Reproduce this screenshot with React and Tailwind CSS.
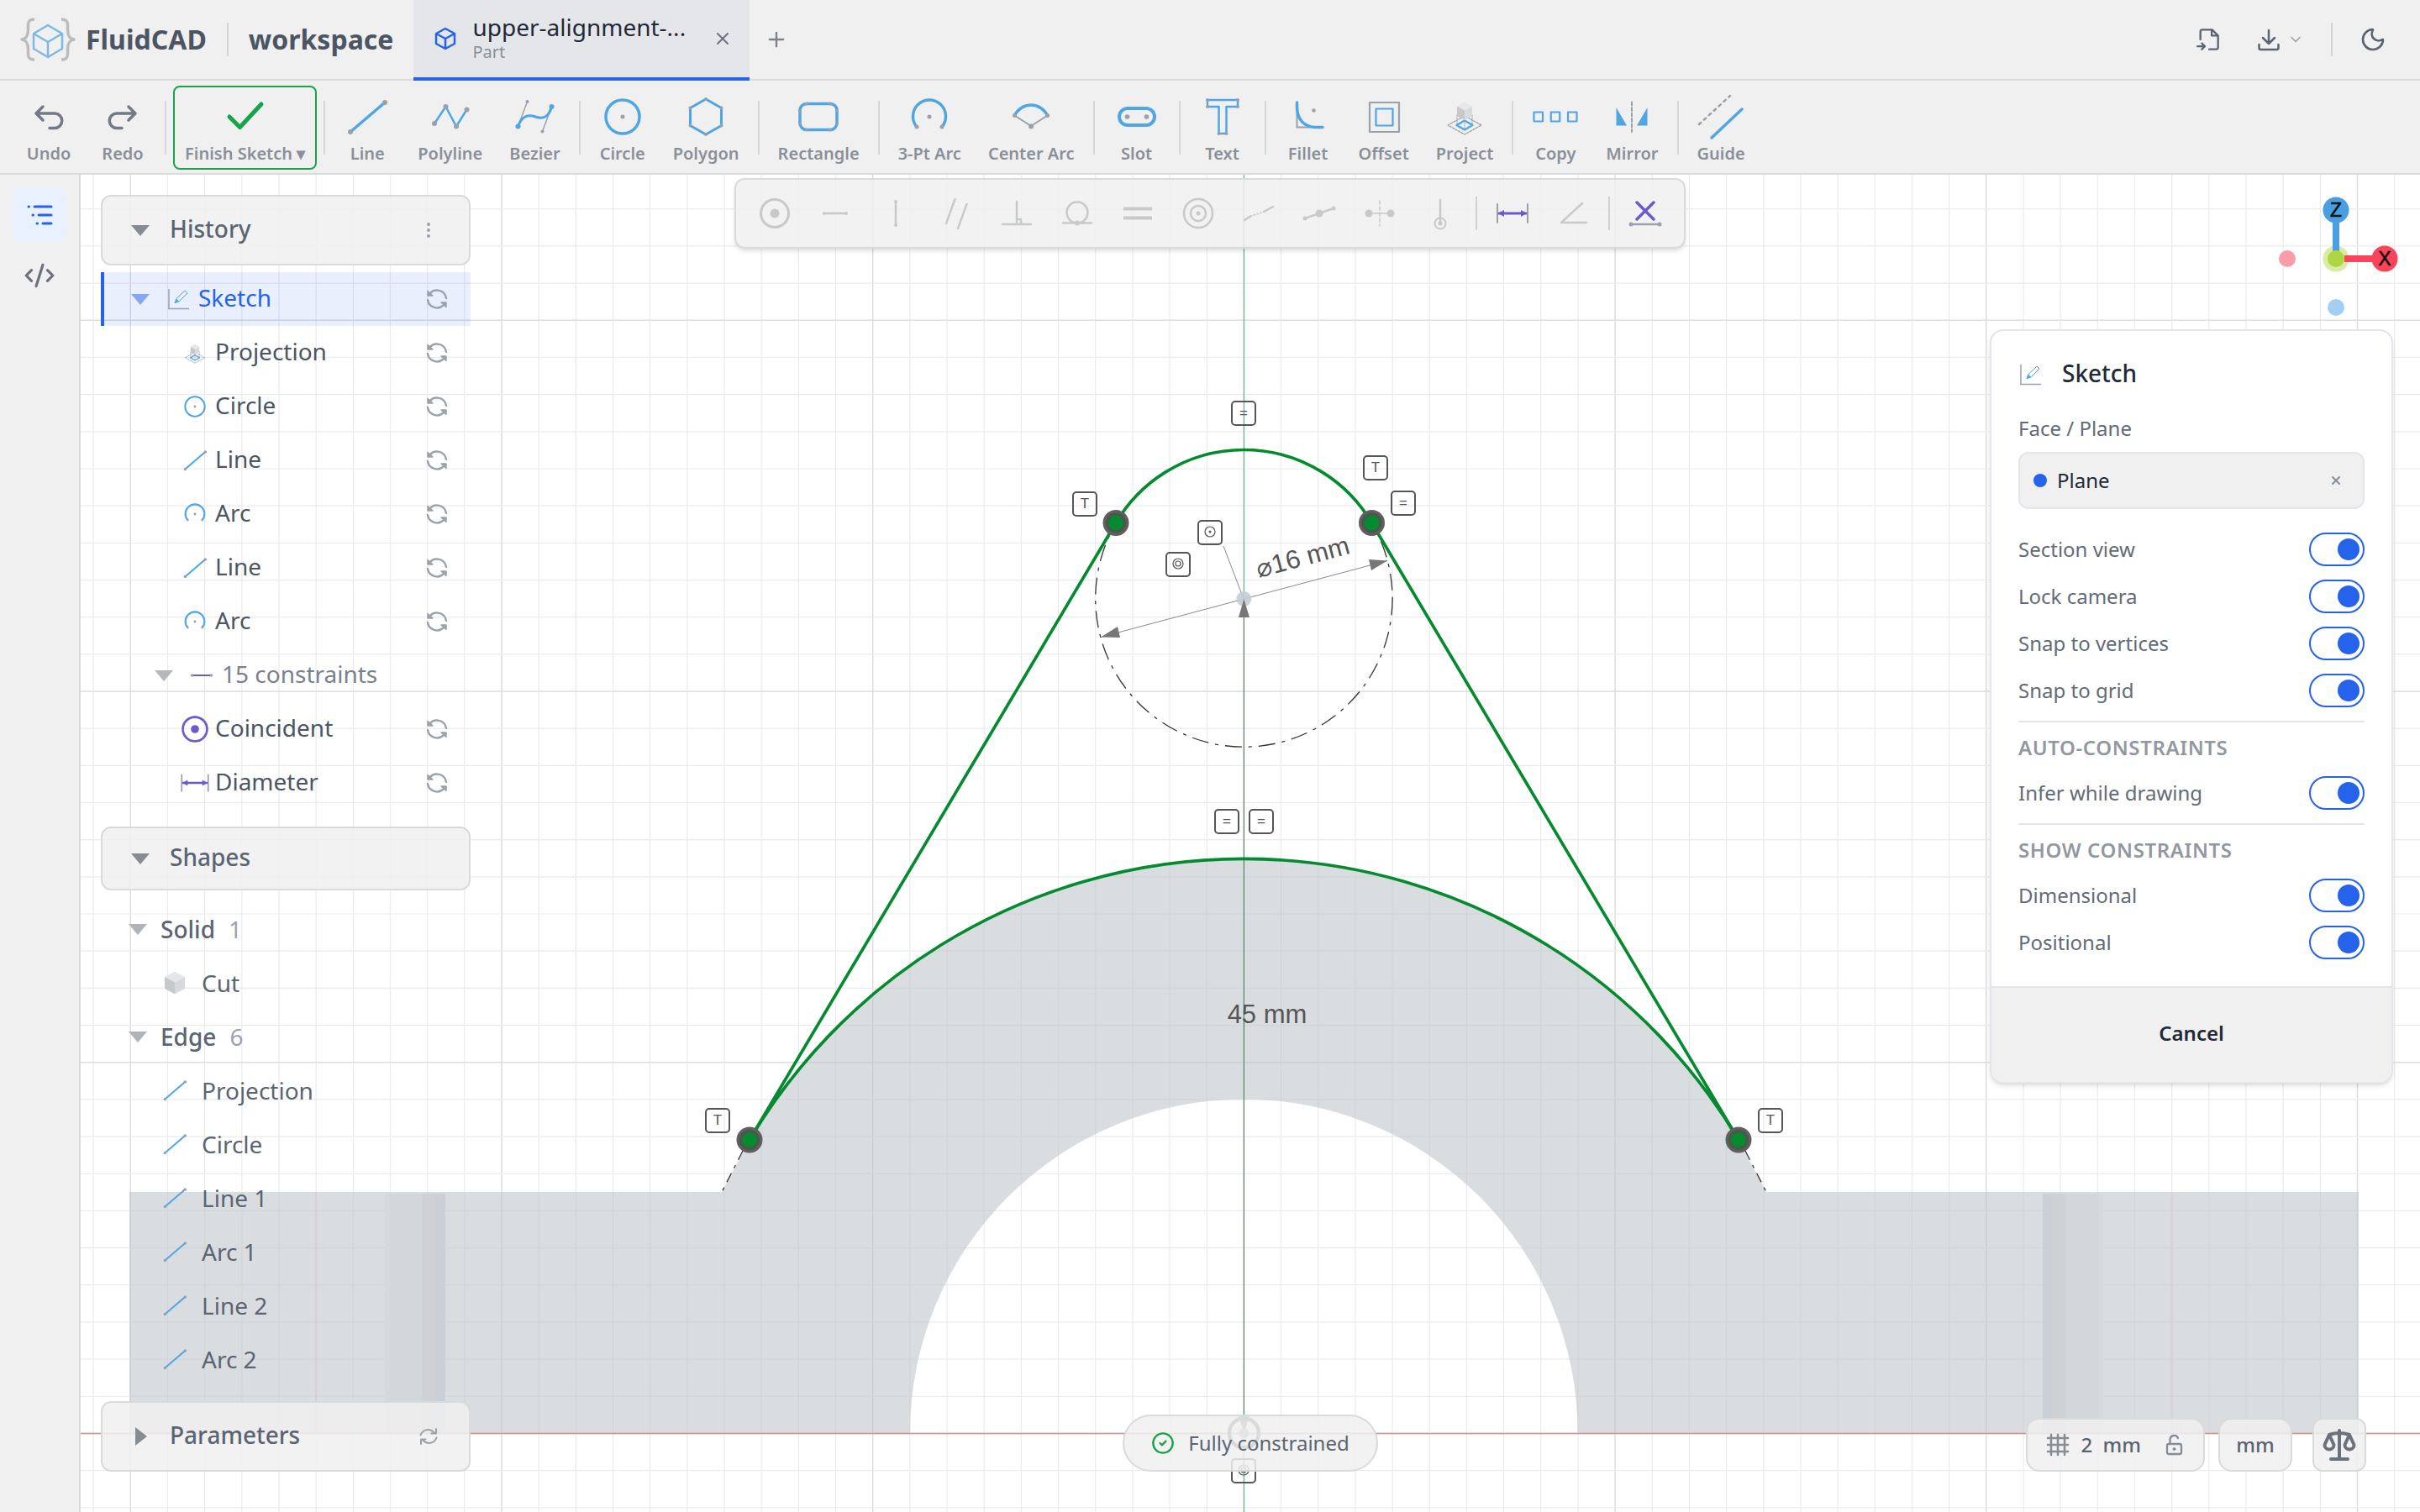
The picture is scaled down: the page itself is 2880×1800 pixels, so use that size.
import { useState } from "react";
import { X, Plus, Moon, ChevronDown, CodeXml, CircleCheck, EllipsisVertical } from "lucide-react";

const BLUE = "#4fa6e2";
const GRAY = "#9aa1ab";
const PURPLE = "#6a5acd";

const Dot = ({ x, y, r = 2, c = GRAY }) => <circle cx={x} cy={y} r={r} fill={c} stroke="none" />;

const Cube = () => (
  <g stroke="none">
    <path d="M24 4 L42 13.5 L24 23 L6 13.5 Z" fill="#e4e6e9" />
    <path d="M6 13.5 L24 23 V44 L6 34.5 Z" fill="#c6c9c9" />
    <path d="M42 13.5 L24 23 V44 L42 34.5 Z" fill="#d6dadd" />
  </g>
);

const toolIcons = {
  line: <><path d="M4 42 L45 7" stroke={BLUE} strokeWidth="3.5" /><Dot x={4} y={42} r={3} /><Dot x={45} y={7} r={3} /></>,
  polyline: <><path d="M5 32 L18.5 12 L31 35.5 L43.5 15.5" stroke={BLUE} strokeWidth="2.5" /><Dot x={5} y={32} r={3} /><Dot x={18.5} y={12} r={3} /><Dot x={31} y={35.5} r={3} /><Dot x={43.5} y={15.5} r={3} /></>,
  bezier: <><path d="M3.5 35.5 L14.5 6 M43.5 12 L32.5 41.5" stroke={GRAY} strokeWidth="1.5" /><path d="M3.5 35.5 C8 23 15 21 24 24 S40 25 43.5 12" stroke={BLUE} strokeWidth="3" /><Dot x={3.5} y={35.5} r={3} c={BLUE} /><Dot x={43.5} y={12} r={3} c={BLUE} /><Dot x={14.5} y={6} /><Dot x={32.5} y={41.5} /></>,
  circle: <><circle cx="24" cy="24" r="20" stroke={BLUE} strokeWidth="3.5" /><Dot x={24} y={24} r={2.5} /></>,
  polygon: <><path d="M24 3 L42.5 13.5 V34.5 L24 45 L5.5 34.5 V13.5 Z" stroke={BLUE} strokeWidth="3" /><Dot x={24} y={3} /><Dot x={42.5} y={13.5} /><Dot x={42.5} y={34.5} /><Dot x={24} y={45} /><Dot x={5.5} y={34.5} /><Dot x={5.5} y={13.5} /></>,
  rectangle: <><rect x="2" y="8.5" width="44" height="31" rx="8" stroke={BLUE} strokeWidth="3.5" /><Dot x={2} y={17} /><Dot x={2} y={32} /><Dot x={46} y={17} /><Dot x={46} y={32} /><Dot x={10} y={8.5} /><Dot x={38} y={8.5} /><Dot x={10} y={39.5} /><Dot x={38} y={39.5} /></>,
  arc: <><path d="M9 36 A19.5 19.5 0 1 1 39 36" stroke={BLUE} strokeWidth="3.5" /><Dot x={9} y={36} r={2.5} /><Dot x={39} y={36} r={2.5} /><Dot x={24} y={24} r={2.5} /></>,
  centerArc: <><path d="M4.5 22.5 L24 35 L43.5 22.5" stroke={GRAY} strokeWidth="2" /><path d="M4.5 22.5 A21.5 21.5 0 0 1 43.5 22.5" stroke={BLUE} strokeWidth="3.5" /><Dot x={24} y={35.5} r={3} /><Dot x={4.5} y={22.5} r={2.5} /><Dot x={43.5} y={22.5} r={2.5} /></>,
  slot: <><rect x="3" y="14" width="42" height="20" rx="10" stroke={BLUE} strokeWidth="4" /><Dot x={12.5} y={24} r={2.8} /><Dot x={35.5} y={24} r={2.8} /></>,
  text: <><path d="M6 4 H42 V12 H28.5 V44 H19.5 V12 H6 Z" stroke={BLUE} strokeWidth="2.5" /><Dot x={6} y={4} /><Dot x={42} y={4} /><Dot x={42} y={12} /><Dot x={6} y={12} /><Dot x={19.5} y={44} /><Dot x={28.5} y={44} /></>,
  fillet: <><path d="M10.5 20 V36.5 H26" stroke={GRAY} strokeWidth="2" /><path d="M10.5 7 V12 C10.5 27 19 36.5 33 36.5 H41" stroke={BLUE} strokeWidth="3.5" /><Dot x={30.5} y={16.5} r={2.3} /></>,
  offset: <><rect x="7" y="7" width="35" height="35" stroke={GRAY} strokeWidth="2.2" /><rect x="14.5" y="14.5" width="20" height="20" stroke={BLUE} strokeWidth="2.2" /></>,
  project: (
    <>
      <path d="M24 23 L44 34 L24 45 L4 34 Z" stroke={GRAY} strokeWidth="1.3" strokeDasharray="2.5 1.5" />
      <path d="M24 28.5 L33.5 34 L24 39.5 L14.5 34 Z" stroke={BLUE} strokeWidth="2.3" />
      <path d="M15 22 V34 M33 22 V34 M24 28 V39" stroke={GRAY} strokeWidth="1" strokeDasharray="1.5 1.5" />
      <path d="M24 6.5 L33 11.5 L24 16.5 L15 11.5 Z" fill="#e6e7e9" stroke="none" />
      <path d="M15 11.5 L24 16.5 V28 L15 23 Z" fill="#c6c8ca" stroke="none" />
      <path d="M33 11.5 L24 16.5 V28 L33 23 Z" fill="#d9dadb" stroke="none" />
    </>
  ),
  copy: <g stroke={BLUE} strokeWidth="2.2"><rect x="-1.5" y="18.5" width="10.5" height="11" /><rect x="18.75" y="18.5" width="10.5" height="11" /><rect x="39" y="18.5" width="10.5" height="11" /></g>,
  mirror: <><path d="M5.5 13 L18 34.5 H5.5 Z M42.5 13 L30 34.5 H42.5 Z" fill={BLUE} stroke="none" /><path d="M24 6.5 V42" stroke={GRAY} strokeWidth="2" strokeDasharray="4 2.5" /></>,
  guide: <><path d="M-2 33 L35 -1" stroke={GRAY} strokeWidth="2.5" strokeDasharray="3 5" /><path d="M13 49 L49 15" stroke={BLUE} strokeWidth="3.5" /></>,
  undo: <path d="M17 12 L9 20 L17 28 M9 20 H31 A8.5 8.5 0 0 1 31 37.5 H25" stroke="#727a84" strokeWidth="3.5" />,
  redo: <path d="M31 12 L39 20 L31 28 M39 20 H17 A8.5 8.5 0 0 0 17 37.5 H23" stroke="#727a84" strokeWidth="3.5" />,
  check: <path d="M5 24 L17.5 36.5 L43 9" stroke="#17a34a" strokeWidth="5" />,
};

const ToolIcon = ({ name, size = 48 }) => (
  <svg width={size} height={size} viewBox="0 0 48 48" fill="none" strokeLinecap="round" strokeLinejoin="round" className="overflow-visible shrink-0">
    {toolIcons[name]}
  </svg>
);

// c is the main stroke, g the helper stroke
const constraintIcons = {
  coincident: (c) => <><circle cx="24" cy="24" r="16.5" stroke={c} strokeWidth="3" /><Dot x={24} y={24} r={5.5} c={c} /></>,
  horizontal: (c, g) => <><path d="M11 24 H37" stroke={c} strokeWidth="2.5" /><Dot x={11} y={24} c={g} /><Dot x={37} y={24} c={g} /></>,
  vertical: (c, g) => <><path d="M24 10 V38" stroke={c} strokeWidth="2.5" /><Dot x={24} y={10} c={g} /><Dot x={24} y={38} c={g} /></>,
  parallel: (c) => <path d="M22.5 7 L12 36 M36.5 13 L26 42" stroke={c} strokeWidth="2.5" />,
  perpendicular: (c) => <path d="M24 10 V37 M7 37 H41 M24 31 H29 V37" stroke={c} strokeWidth="2.5" />,
  tangent: (c) => <><circle cx="24" cy="23" r="12.5" stroke={c} strokeWidth="2.5" /><path d="M7 35.5 H41" stroke={c} strokeWidth="2.5" /><Dot x={24} y={35.5} r={3} c={c} /></>,
  equal: (c) => <path d="M7 18.5 H41 M7 29.5 H41" stroke={c} strokeWidth="4" strokeLinecap="butt" />,
  concentric: (c) => <><circle cx="24" cy="24" r="17" stroke={c} strokeWidth="2.5" /><circle cx="24" cy="24" r="9" stroke={c} strokeWidth="2.5" /><Dot x={24} y={24} r={2.5} c={c} /></>,
  collinear: (c) => <><path d="M7 32 L15 27 M30 22 L41 16" stroke={c} strokeWidth="2.5" /><path d="M18 26 L28 23" stroke={c} strokeWidth="1.5" strokeDasharray="1.5 2.5" /></>,
  midpoint: (c) => <><path d="M7 30 L41 18" stroke={c} strokeWidth="2.5" /><Dot x={24} y={24} r={4.5} c={c} /><Dot x={7} y={30} r={2.5} c={c} /><Dot x={41} y={18} r={2.5} c={c} /></>,
  symmetric: (c) => <><path d="M24 9 V39" stroke={c} strokeWidth="1.5" strokeDasharray="4 3" /><path d="M11 24 H37" stroke={c} strokeWidth="1.5" /><Dot x={11} y={24} r={4.5} c={c} /><Dot x={37} y={24} r={4.5} c={c} /></>,
  fix: (c) => <><path d="M24 8 V35" stroke={c} strokeWidth="2.5" /><circle cx="24" cy="36" r="6.5" stroke={c} strokeWidth="2" /><Dot x={24} y={36} r={2.5} c={c} /></>,
  dimension: (c, g) => <><path d="M6 13 V35 M42 13 V35" stroke={g} strokeWidth="2" /><path d="M8 24 H40" stroke={c} strokeWidth="3" /><path d="M7 24 L14 20 V28 Z M41 24 L34 20 V28 Z" fill={c} stroke="none" /></>,
  angle: (c) => <path d="M35 12 L10 35 H40" stroke={c} strokeWidth="2.5" />,
  remove: (c, g) => <><path d="M14 11 L34 31 M34 11 L14 31" stroke={c} strokeWidth="3.5" /><path d="M7 37 H41" stroke={g} strokeWidth="2.5" /><Dot x={7} y={37} c={g} r={2.5} /><Dot x={41} y={37} c={g} r={2.5} /></>,
};

const ConstraintIcon = ({ name, size = 32, disabled }) => (
  <svg width={size} height={size} viewBox="8 8 32 32" fill="none" strokeLinecap="round" strokeLinejoin="round" className="overflow-visible shrink-0">
    {constraintIcons[name](disabled ? "#c8c9ca" : PURPLE, disabled ? "#c8c9ca" : GRAY)}
  </svg>
);

const SketchIcon = ({ size = 28 }) => (
  <svg width={size} height={size} viewBox="0 0 28 28" fill="none" className="shrink-0">
    <path d="M3 2 V26 M2 25.5 H27" stroke="#9aa1ab" strokeWidth="1.5" />
    <path d="M12 13.5 L22 4 L25 7 L15 17 L10 18.5 Z" stroke={BLUE} strokeWidth="1" />
    <path d="M9.5 19 L12 13.5 L15 17 Z" fill={BLUE} />
  </svg>
);

const ShapeIcon = ({ name }) => {
  if (name === "cube") return <svg width="32" height="32" viewBox="2 0 44 48" className="shrink-0"><Cube /></svg>;
  if (constraintIcons[name]) return <ConstraintIcon name={name} size={28} />;
  return <ToolIcon name={name} size={28} />;
};

const Sync = () => (
  <svg width="24" height="24" viewBox="0 0 24 24" fill="none" stroke="currentColor" strokeWidth="2.4" strokeLinecap="round" strokeLinejoin="round" className="overflow-visible">
    <path d="M23 11 A11 11 0 0 0 3 6.5 M1 13 A11 11 0 0 0 21 17.5" />
    <path d="M1 2.5 V8 H7 Z M23 21.5 V16 H17 Z" fill="currentColor" strokeWidth="1.5" />
  </svg>
);

const SyncThin = () => (
  <svg width="24" height="24" viewBox="0 0 24 24" fill="none" stroke="currentColor" strokeWidth="2" strokeLinecap="round" strokeLinejoin="round">
    <path d="M2.5 10.5 C4.5 4.5 11 2.5 16.5 5.5 L20 8.5 M21 3 V8.5 H15.5 M21.5 13.5 C19.5 19.5 13 21.5 7.5 18.5 L4 15.5 M3 21 V15.5 H8.5" />
  </svg>
);

const Triangle = ({ open = true, className }) => (
  <svg width="22" height="22" viewBox="0 0 22 22" fill="currentColor" className={className}>
    {open ? <path d="M0 5 H22 L11 18 Z" /> : <path d="M5 0 V22 L19 11 Z" />}
  </svg>
);

const tools = [
  ["Undo", "undo"], ["Redo", "redo"], null,
  ["Finish Sketch ▾", "check"], null,
  ["Line", "line"], ["Polyline", "polyline"], ["Bezier", "bezier"], null,
  ["Circle", "circle"], ["Polygon", "polygon"], null,
  ["Rectangle", "rectangle"], null,
  ["3-Pt Arc", "arc"], ["Center Arc", "centerArc"], null,
  ["Slot", "slot"], null,
  ["Text", "text"], null,
  ["Fillet", "fillet"], ["Offset", "offset"], ["Project", "project"], null,
  ["Copy", "copy"], ["Mirror", "mirror"], null,
  ["Guide", "guide"],
];

const constraints = ["coincident", "horizontal", "vertical", "parallel", "perpendicular", "tangent", "equal", "concentric", "collinear", "midpoint", "symmetric", "fix", null, "dimension", "angle", null, "remove"];

const history = [
  { label: "Projection", icon: "project" },
  { label: "Circle", icon: "circle" },
  { label: "Line", icon: "line" },
  { label: "Arc", icon: "arc" },
  { label: "Line", icon: "line" },
  { label: "Arc", icon: "arc" },
  { label: "15 constraints", icon: "horizontal", group: true },
  { label: "Coincident", icon: "coincident" },
  { label: "Diameter", icon: "dimension" },
];

const edges = ["Projection", "Circle", "Line 1", "Arc 1", "Line 2", "Arc 2"];

const Header = () => (
  <header className="h-24 shrink-0 flex items-stretch bg-[#f0f0f0] border-b-2 border-[#d9dadc]">
    <div className="flex items-center pl-6">
      <svg width="66" height="52" viewBox="0 0 66 52" fill="none" strokeLinejoin="round" className="shrink-0">
        <path d="M17 2 C8 2 9.5 8 9.5 14 C9.5 21 8 25 2 26 C8 27 9.5 31 9.5 38 C9.5 44 8 50 17 50 M49 2 C58 2 56.5 8 56.5 14 C56.5 21 58 25 64 26 C58 27 56.5 31 56.5 38 C56.5 44 58 50 49 50" stroke="#bcbcbc" strokeWidth="3.5" />
        <path d="M33 9 L50 19 V37 L33 47 L16 37 V19 Z M16 19 L33 29 L50 19 M33 29 V47" stroke="#7db9e3" strokeWidth="2.5" />
      </svg>
      <h1 className="ml-3 text-[32px] font-bold text-[#4b5563]">FluidCAD</h1>
      <div className="w-[2px] h-10 bg-[#d2d4d6] ml-6" />
      <span className="ml-6 text-[32px] font-bold text-[#4b5563]">workspace</span>
    </div>
    <div className="ml-6 w-[400px] -mb-[2px] flex items-center pl-6 pr-5 bg-[#e5e6ea] border-b-4 border-[#2563eb]">
      <svg width="28" height="28" viewBox="0 0 28 28" fill="none" stroke="#2563eb" strokeWidth="2.5" strokeLinejoin="round">
        <path d="M14 2 L25 8 V20 L14 26 L3 20 V8 Z M3 8 L14 14 L25 8 M14 14 V26" />
      </svg>
      <div className="ml-[18px] flex-1 flex flex-col">
        <span className="text-[28px] leading-8 text-[#1f2937] whitespace-nowrap">upper-alignment-...</span>
        <span className="text-[20px] leading-7 text-[#8a9099]">Part</span>
      </div>
      <button aria-label="Close tab" className="text-[#6b7280]"><X size={24} /></button>
    </div>
    <button aria-label="New tab" className="ml-4 w-8 flex items-center justify-center text-[#7b828c]"><Plus size={28} /></button>
    <div className="ml-auto pr-10 flex items-center text-[#5b6472]">
      <button aria-label="Import">
        <svg width="28" height="28" viewBox="0 0 24 24" fill="none" stroke="currentColor" strokeWidth="2" strokeLinecap="round" strokeLinejoin="round">
          <path d="M4 12 V4 A2 2 0 0 1 6 2 H16 L22 8 V20 A2 2 0 0 1 20 22 H13 M15.5 2 V8 H22 M1 19 H8 M5.5 16 L8.5 19 L5.5 22" />
        </svg>
      </button>
      <button aria-label="Export" className="ml-11 flex items-center gap-2">
        <svg width="28" height="28" viewBox="0 0 28 28" fill="none" stroke="currentColor" strokeWidth="2.5" strokeLinecap="round" strokeLinejoin="round">
          <path d="M14 3 V19 M7 12 L14 19 L21 12 M2.5 20 V24 A2 2 0 0 0 4.5 26 H23.5 A2 2 0 0 0 25.5 24 V20" />
        </svg>
        <ChevronDown size={20} className="text-[#9aa1ab]" />
      </button>
      <div className="w-[2px] h-10 bg-[#d2d4d6] ml-8 mr-8" />
      <button aria-label="Dark mode"><Moon size={32} strokeWidth={2} /></button>
    </div>
  </header>
);

const Toolbar = () => (
  <nav className="h-28 shrink-0 flex items-center gap-1 pl-4 pt-[2px] bg-[#f0f0f0] border-b-2 border-[#d9dadc]">
    {tools.map((tool, i) =>
      tool ? (
        <button
          key={i}
          className={`h-[100px] min-w-[84px] pt-[8px] flex flex-col items-center justify-center gap-[6px] rounded-lg text-[20px] leading-7 font-semibold text-[#8a9099] whitespace-nowrap ${tool[1] === "check" ? "px-3 border-2 border-[#17a34a]" : "px-[14px]"}`}
        >
          <ToolIcon name={tool[1]} />
          {tool[0]}
        </button>
      ) : (
        <div key={i} className="w-[2px] h-16 mx-1 bg-[#d5d7da]" />
      )
    )}
  </nav>
);

const Rail = () => (
  <nav className="w-24 shrink-0 bg-[#f0f0f0] border-r-2 border-[#d9dadc] flex flex-col items-center gap-2 pt-4">
    <button aria-label="Feature tree" className="size-16 rounded-lg bg-[#eaf1fe] flex items-center justify-center text-[#2563eb]">
      <svg width="32" height="32" viewBox="0 0 32 32" fill="none" stroke="currentColor" strokeWidth="3" strokeLinecap="round">
        <path d="M3 6 H3.5 M10 6 H30 M8 16 H8.5 M15 16 H30 M13 26 H13.5 M20 26 H30" />
      </svg>
    </button>
    <button aria-label="Code" className="size-16 flex items-center justify-center text-[#6b727c]"><CodeXml size={38} /></button>
  </nav>
);

const SectionHead = ({ title, open = true, className, children }) => (
  <div className={`flex items-center justify-between pl-[34px] pr-9 border-2 border-[#d9dadc] rounded-xl bg-[#f0f0f0]/85 ${className}`}>
    <button className="flex items-center gap-6 text-[28px] leading-10 font-medium text-[#5b6472]">
      <Triangle open={open} className="text-[#868c94]" />
      <span className="pb-1">{title}</span>
    </button>
    {children}
  </div>
);

const TreeRow = ({ label, icon, group }) => (
  <li className={`h-16 flex items-center pr-7 text-[28px] leading-10 ${group ? "pl-16 text-[#7a818b]" : "pl-[98px] text-[#4b5563]"}`}>
    {group && <Triangle className="text-[#b4b8bc] mr-5" />}
    <ShapeIcon name={icon} />
    <span className="flex-1 ml-[10px] pb-1">{label}</span>
    {!group && <button aria-label={`Rebuild ${label}`} className="text-[#9ca3a9]"><Sync /></button>}
  </li>
);

const GroupRow = ({ label, count }) => (
  <li className="h-16 flex items-center pl-[33px] text-[28px] leading-10 font-medium text-[#5b6472]">
    <Triangle className="text-[#b0b4b8]" />
    <span className="ml-4">{label}</span>
    <span className="ml-4 font-normal text-[#9ca3af]">{count}</span>
  </li>
);

const ShapeRow = ({ label, icon = "line" }) => (
  <li className="h-16 flex items-center pl-[72px] gap-4 text-[28px] leading-10 text-[#5b6472]">
    <span className="w-8 flex justify-center"><ShapeIcon name={icon} /></span>
    {label}
  </li>
);

const TreePanel = () => (
  <aside className="w-[440px] flex flex-col">
    <SectionHead title="History" className="h-[84px]">
      <button aria-label="History menu" className="text-[#9aa1a8]"><EllipsisVertical size={24} /></button>
    </SectionHead>
    <ul className="mt-2">
      <li className="h-16 flex items-center pl-8 pr-7 border-l-4 border-[#2563eb] bg-[#2563eb]/10 text-[28px] leading-10 text-[#2563eb]">
        <Triangle className="text-[#86a6f2] mr-5" />
        <SketchIcon />
        <span className="flex-1 ml-[10px] pb-1">Sketch</span>
        <button aria-label="Rebuild Sketch" className="text-[#97a2b2]"><Sync /></button>
      </li>
      {history.map((item, i) => <TreeRow key={i} {...item} />)}
    </ul>
    <SectionHead title="Shapes" className="h-[76px] mt-5" />
    <ul className="mt-[14px]">
      <GroupRow label="Solid" count={1} />
      <ShapeRow label="Cut" icon="cube" />
      <GroupRow label="Edge" count={6} />
      {edges.map((label) => <ShapeRow key={label} label={label} />)}
    </ul>
    <SectionHead title="Parameters" open={false} className="h-[84px] mt-auto">
      <button aria-label="Reset parameters" className="text-[#9aa1a8]"><SyncThin /></button>
    </SectionHead>
  </aside>
);

const Gizmo = () => (
  <svg width="160" height="160" viewBox="0 0 160 160" className="mr-5 font-['Liberation_Sans',sans-serif]">
    <circle cx="22" cy="80" r="10" fill="#fb9ca9" />
    <circle cx="80" cy="138" r="10" fill="#a3cff2" />
    <circle cx="80" cy="80" r="15.5" fill="#d8eca3" />
    <path d="M80 22 V72" stroke="#4a9fe3" strokeWidth="8" />
    <path d="M90 80 H138" stroke="#fb4459" strokeWidth="8" />
    <circle cx="80" cy="80" r="10" fill="#acd742" />
    <circle cx="80" cy="22" r="15.5" fill="#4a9fe3" />
    <circle cx="138" cy="80" r="15.5" fill="#fb4459" />
    <text x="80" y="30" textAnchor="middle" fontSize="23" fill="#111" stroke="#111" strokeWidth="0.6">Z</text>
    <text x="138" y="88" textAnchor="middle" fontSize="23" fill="#111" stroke="#111" strokeWidth="0.6">X</text>
  </svg>
);

const Toggle = ({ label }) => {
  const [on, setOn] = useState(true);
  return (
    <label className="h-10 flex items-center justify-between text-[24px] leading-8 text-[#636b76]">
      {label}
      <input
        type="checkbox"
        checked={on}
        onChange={(e) => setOn(e.target.checked)}
        className="appearance-none w-[66px] h-10 px-1 flex items-center rounded-full border-2 border-gray-400 bg-white checked:border-[#2563eb] before:block before:size-[26px] before:rounded-full before:bg-gray-400 checked:before:bg-[#2563eb] checked:before:ml-auto"
      />
    </label>
  );
};

const GroupTitle = ({ children }) => (
  <h3 className="h-8 pb-1 flex items-center text-[24px] leading-8 font-semibold tracking-wide text-[#9298a0]">{children}</h3>
);

const SketchPanel = () => (
  <section className="mt-1 mr-8 w-[480px] rounded-2xl border-2 border-[#e4e5ea] bg-white shadow-md overflow-hidden">
    <div className="p-8">
      <div className="h-10 flex items-center gap-6">
        <SketchIcon />
        <h2 className="pb-1 text-[28px] leading-10 font-medium text-[#1f2937]">Sketch</h2>
      </div>
      <p className="mt-7 text-[24px] leading-8 text-[#636b76]">Face / Plane</p>
      <div className="mt-3 h-[68px] flex items-center rounded-xl border-2 border-[#e4e5ea] bg-[#f0f0f0] px-4">
        <span className="size-4 rounded-full bg-[#2563eb]" />
        <span className="ml-3 flex-1 text-[24px] leading-8 text-[#1f2937]">Plane</span>
        <button aria-label="Clear plane" className="w-8 flex justify-center text-[#868d96]"><X size={16} strokeWidth={3} /></button>
      </div>
      <div className="mt-7 flex flex-col gap-4">
        <Toggle label="Section view" />
        <Toggle label="Lock camera" />
        <Toggle label="Snap to vertices" />
        <Toggle label="Snap to grid" />
        <div className="h-[2px] bg-[#e4e5ea]" />
        <GroupTitle>AUTO-CONSTRAINTS</GroupTitle>
        <Toggle label="Infer while drawing" />
        <div className="h-[2px] bg-[#e4e5ea]" />
        <GroupTitle>SHOW CONSTRAINTS</GroupTitle>
        <Toggle label="Dimensional" />
        <Toggle label="Positional" />
      </div>
    </div>
    <button className="w-full h-[114px] pb-1 border-t-2 border-[#e4e5ea] bg-[#f0f0f0] text-[24px] leading-8 font-semibold text-[#1f2937]">Cancel</button>
  </section>
);

const ConstraintBar = () => (
  <div className="absolute top-[212px] inset-x-0 flex justify-center pointer-events-none">
    <div className="pointer-events-auto flex items-center gap-2 py-2 px-[14px] rounded-xl border-2 border-[#d9dadc] bg-[#f0f0f0]/85 shadow-md">
      {constraints.map((name, i) =>
        name ? (
          <button key={i} aria-label={name} className="size-16 flex items-center justify-center">
            <ConstraintIcon name={name} disabled={i < 13 || name === "angle"} />
          </button>
        ) : (
          <div key={i} className="w-[2px] h-10 mx-[2px] bg-[#cfd1d4]" />
        )
      )}
    </div>
  </div>
);

// sketch space: origin at the axes crossing, one grid step is 2 mm
const OX = 1480.4;
const OY = 1706.4;
const STEP = 44.17;

const badges = [
  [1480, 492, "="], [1291, 600, "T"], [1637, 557, "T"], [1670, 599, "="],
  [1440, 634, "⊙"], [1402, 672, "◎"], [1460, 978, "="], [1501, 978, "="],
  [854, 1334, "T"], [2107, 1334, "T"], [1480, 1751, "◎"],
];

const Badge = ({ x, y, glyph }) => (
  <g stroke="#555" fill="none">
    <rect x={x - 14} y={y - 14} width="28" height="28" rx="4" strokeWidth="2" />
    {glyph === "⊙" || glyph === "◎" ? (
      <>
        <circle cx={x} cy={y - 1} r="6" strokeWidth="1.2" />
        {glyph === "◎" ? <circle cx={x} cy={y - 1} r="3" strokeWidth="1.2" /> : <circle cx={x} cy={y - 1} r="1.5" fill="#555" stroke="none" />}
      </>
    ) : (
      <text x={x} y={y + 5} textAnchor="middle" fontSize="17" fill="#555" stroke="none">{glyph}</text>
    )}
  </g>
);

const Node = ({ x, y }) => (
  <g>
    <circle cx={x} cy={y} r="15.5" fill="#5f5f5f" />
    <circle cx={x} cy={y} r="12" fill="#4a574b" />
    <circle cx={x} cy={y} r="9" fill="#058a30" />
  </g>
);

const SolidBand = ({ flip }) => (
  <g transform={flip ? `translate(${OX * 2} 0) scale(-1 1)` : undefined}>
    <rect x="375" y="1419" width="2" height="287" fill="#d8d0d0" />
    <rect x="458" y="1421" width="6" height="285" fill="#d7d8da" />
    <rect x="464" y="1421" width="38" height="285" fill="#d3d6d8" />
    <rect x="502" y="1421" width="17" height="285" fill="#cfd1d4" />
    <rect x="519" y="1421" width="11" height="285" fill="#cbcfd8" />
  </g>
);

const Canvas = () => {
  const cols = [];
  for (let n = -32; n <= 32; n++) cols.push(n);
  const rows = [];
  for (let n = -3; n <= 34; n++) rows.push(n);
  return (
    <svg viewBox="96 208 2784 1592" preserveAspectRatio="xMidYMid slice" className="absolute inset-0 w-full h-full font-['Liberation_Sans',sans-serif]">
      {cols.map((n) => <path key={n} d={`M${OX + n * STEP} 208 V1800`} stroke={n % 10 === 0 ? "#dcdde0" : "#ebebef"} strokeWidth={n % 10 === 0 ? 1.5 : 1.2} />)}
      {rows.map((n) => <path key={n} d={`M96 ${OY - n * STEP} H2880`} stroke={n % 10 === 0 ? "#dcdde0" : "#ebebef"} strokeWidth={n % 10 === 0 ? 1.5 : 1.2} />)}

      <path
        d="M154 1706 V1419 H859 L892 1357 A684.8 684.8 0 0 1 2069 1357 L2102 1419 H2807 V1706 H1877.6 A397.3 397.3 0 0 0 1083 1706 Z"
        fill="#c0c6cb"
        fillOpacity="0.6"
      />
      <SolidBand />
      <SolidBand flip />
      <path d="M96 1706.5 H2880" stroke="#d98c8c" strokeWidth="1.5" />
      <path d={`M${OX} 208 V1800`} stroke="#52ad78" strokeWidth="1" />
      <path d={`M${OX} 713 V1706`} stroke="#4d8663" strokeWidth="1" />

      <circle cx={OX} cy="712.5" r="176.7" stroke="#333" strokeWidth="1.3" fill="none" strokeDasharray="20 8 4 8" />
      <path d="M884 1370 L859 1419 M2077 1370 L2102 1419" stroke="#333" strokeWidth="1.3" strokeDasharray="12 7 4 7" />
      <path d="M1456 650 L1480 713 M1310 758.5 L1651 667.5" stroke="#8a8a8a" strokeWidth="1" />
      <path d="M1310 758.5 L1330 746 L1333 759 Z M1651 667.5 L1629 666 L1632 679 Z" fill="#777" />
      <circle cx={OX} cy="713" r="9" fill="#c5ccd5" fillOpacity="0.9" />
      <path d="M1480.4 713 L1487 735 H1474 Z M1480.4 1706 L1487 1685 H1474 Z" fill="#777" />

      <g fill="none" stroke="#058a30" strokeWidth="3.7">
        <path d="M892 1357 L1328 622.5 A176.7 176.7 0 0 1 1632.5 622.5 L2069 1357" />
        <path d="M892 1357 A684.8 684.8 0 0 1 2069 1357" />
      </g>
      <Node x={1328} y={622.5} />
      <Node x={1632.5} y={622.5} />
      <Node x={892} y={1357} />
      <Node x={2069} y={1357} />

      <circle cx={OX} cy="1706" r="17.5" fill="none" stroke="#5f5f5f" strokeWidth="4.5" />
      <circle cx={OX} cy="1706" r="6" fill="#9aa5b3" />
      {badges.map(([x, y, glyph], i) => <Badge key={i} x={x} y={y} glyph={glyph} />)}
      <text x="1508" y="1218" textAnchor="middle" fontSize="31" fill="#555">45 mm</text>
      <text x="1498" y="688" fontSize="31" fill="#555" transform="rotate(-15 1498 688)">⌀16 mm</text>
    </svg>
  );
};

const BottomBar = () => (
  <div className="mt-auto mb-12 mr-16 flex items-center text-[24px] leading-8 font-medium text-[#5b6472]">
    <div className="h-16 flex items-center px-[22px] rounded-2xl border-2 border-[#d9dadc] bg-[#f0f0f0]/85">
      <svg width="28" height="28" viewBox="0 0 28 28" stroke="#868d96" strokeWidth="2.5" strokeLinecap="round">
        <path d="M6 2 V26 M14 2 V26 M22 2 V26 M2 6 H26 M2 14 H26 M2 22 H26" />
      </svg>
      <input aria-label="Grid spacing" defaultValue="2" className="ml-[14px] w-[14px] bg-transparent outline-none" />
      <span className="ml-3">mm</span>
      <button aria-label="Unlock grid spacing" className="ml-7 text-[#868d96]">
        <svg width="24" height="28" viewBox="0 0 24 28" fill="none" stroke="currentColor" strokeWidth="2.3" strokeLinecap="round">
          <rect x="3" y="13" width="17" height="12" rx="2" />
          <path d="M6.5 13 V7 A5 5 0 0 1 16 6" />
          <circle cx="11.5" cy="19" r="1.5" fill="currentColor" strokeWidth="1" />
        </svg>
      </button>
    </div>
    <button className="ml-4 h-16 w-[88px] rounded-2xl border-2 border-[#d9dadc] bg-[#f0f0f0]/85">mm</button>
    <button aria-label="Measure" className="ml-6 size-16 flex items-center justify-center rounded-xl border-2 border-[#d9dadc] bg-[#f0f0f0]/85 text-[#6b727c]">
      <svg width="40" height="40" viewBox="0 0 40 40" fill="none" stroke="currentColor" strokeWidth="4" strokeLinecap="round" strokeLinejoin="round">
        <path d="M20 3 V37 M10 37 H30 M8 8 Q20 4 32 8 M8 8 L2.5 20 A5.5 5.5 0 0 0 13.5 20 Z M32 8 L26.5 20 A5.5 5.5 0 0 0 37.5 20 Z" />
      </svg>
    </button>
  </div>
);

const App = () => {
  return (
    <div className="relative h-screen flex flex-col overflow-hidden bg-white font-['Noto_Sans',sans-serif]">
      <Header />
      <Toolbar />
      <div className="flex-1 min-h-0 flex">
        <Rail />
        <main className="relative flex-1 flex">
          <Canvas />
          <div className="relative flex-1 flex justify-between">
            <div className="flex pl-6 pt-6 pb-12">
              <TreePanel />
            </div>
            <div className="flex flex-col items-end pt-5">
              <Gizmo />
              <SketchPanel />
              <BottomBar />
            </div>
          </div>
          <div className="absolute inset-x-0 bottom-12 flex justify-center pointer-events-none">
            <div className="h-[68px] flex items-center gap-4 px-8 rounded-full border-2 border-[#d9dadc] bg-[#f0f0f0]/85 text-[24px] leading-8 text-[#5b6472]">
              <CircleCheck size={28} className="text-[#17a34a]" />
              Fully constrained
            </div>
          </div>
        </main>
      </div>
      <ConstraintBar />
    </div>
  );
};

export default App;
